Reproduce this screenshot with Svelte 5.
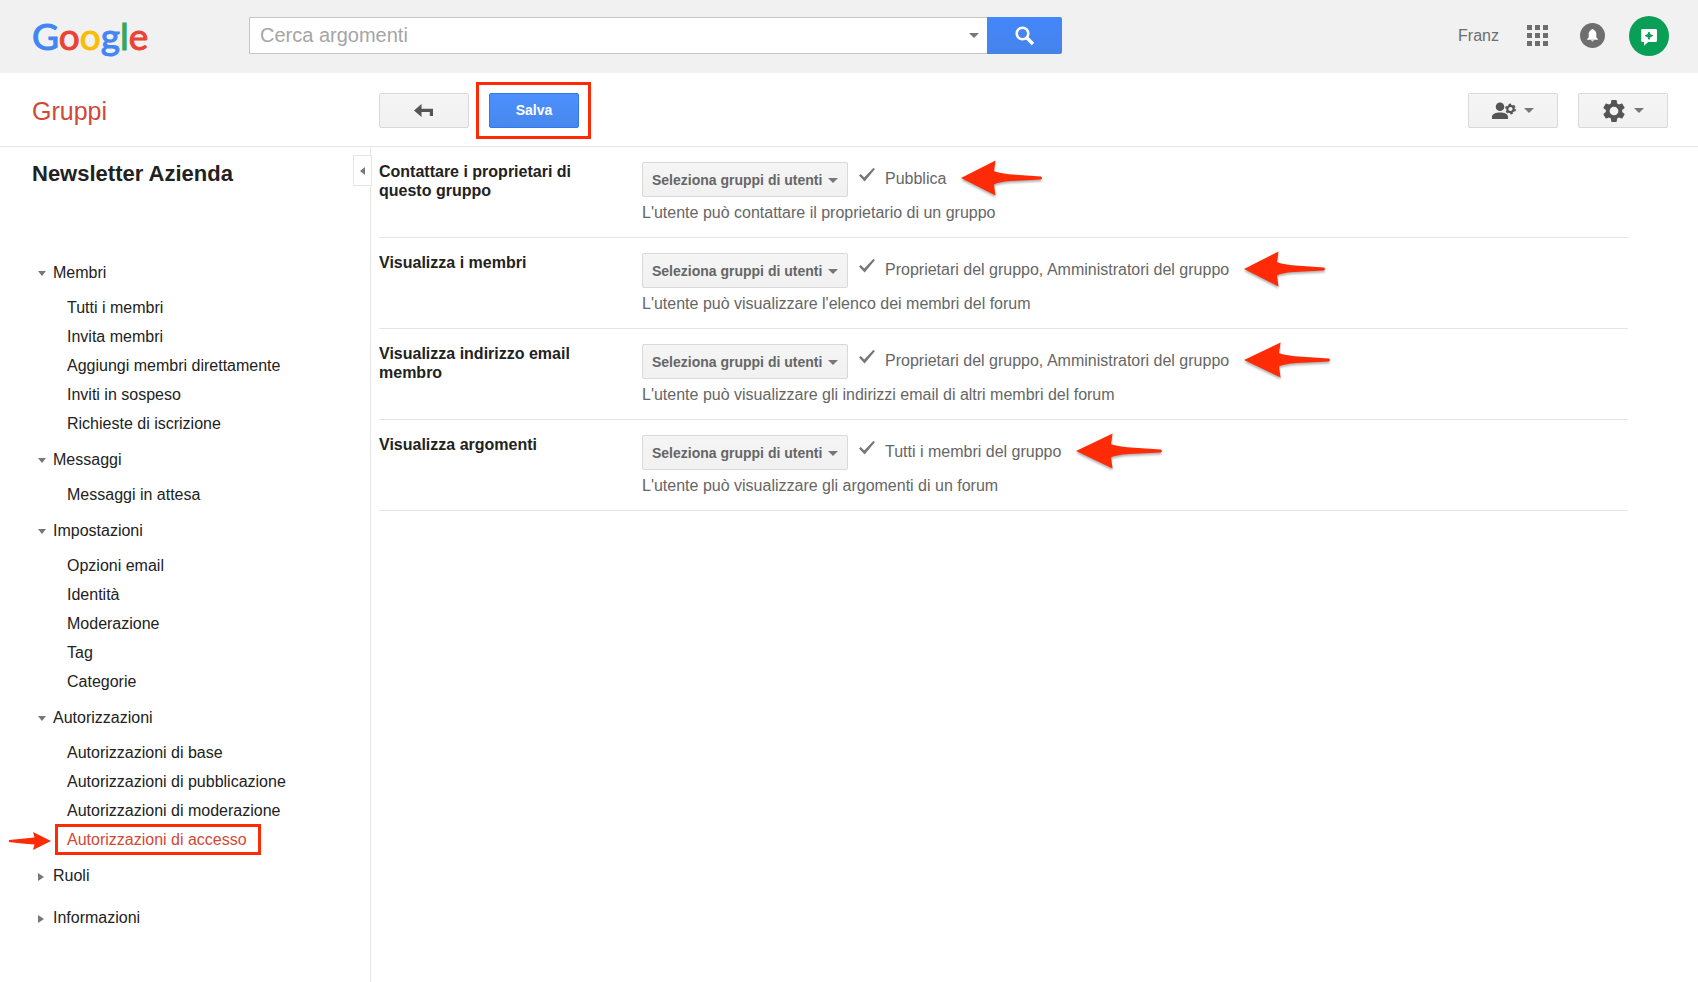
<script>
	const logo = ['G', 'o', 'o', 'g', 'l', 'e'];

	const sections = [
		{
			title: 'Membri',
			items: [
				'Tutti i membri',
				'Invita membri',
				'Aggiungi membri direttamente',
				'Inviti in sospeso',
				'Richieste di iscrizione'
			]
		},
		{ title: 'Messaggi', items: ['Messaggi in attesa'] },
		{
			title: 'Impostazioni',
			items: ['Opzioni email', 'Identità', 'Moderazione', 'Tag', 'Categorie']
		},
		{
			title: 'Autorizzazioni',
			items: [
				'Autorizzazioni di base',
				'Autorizzazioni di pubblicazione',
				'Autorizzazioni di moderazione',
				'Autorizzazioni di accesso'
			]
		},
		{ title: 'Ruoli', items: [] },
		{ title: 'Informazioni', items: [] }
	];

	const permissions = [
		{
			id: 'contact',
			label: 'Contattare i proprietari di questo gruppo',
			value: 'Pubblica',
			hint: "L'utente può contattare il proprietario di un gruppo",
			arrow: 82
		},
		{
			id: 'members',
			label: 'Visualizza i membri',
			value: 'Proprietari del gruppo, Amministratori del gruppo',
			hint: "L'utente può visualizzare l'elenco dei membri del forum",
			arrow: 82
		},
		{
			id: 'emails',
			label: 'Visualizza indirizzo email membro',
			value: 'Proprietari del gruppo, Amministratori del gruppo',
			hint: "L'utente può visualizzare gli indirizzi email di altri membri del forum",
			arrow: 87
		},
		{
			id: 'topics',
			label: 'Visualizza argomenti',
			value: 'Tutti i membri del gruppo',
			hint: "L'utente può visualizzare gli argomenti di un forum",
			arrow: 87
		}
	];

	let active = $state('Autorizzazioni di accesso');
	let query = $state('');
</script>

<div class="page">
	<header class="topbar">
		<a class="logo" href="#home" aria-label="Google"
			>{#each logo as letter, i}<span class="l{i}">{letter}</span>{/each}</a
		>
		<form class="search" onsubmit={(e) => e.preventDefault()}>
			<div class="search-box">
				<input type="text" placeholder="Cerca argomenti" aria-label="Cerca argomenti" bind:value={query} />
				<button type="button" class="search-options" aria-label="Opzioni di ricerca">
					<span class="caret"></span>
				</button>
			</div>
			<button type="submit" class="search-btn" aria-label="Cerca">
				<svg width="20" height="20" viewBox="0 0 20 20" fill="none" stroke="#fff">
					<circle cx="7.5" cy="7.5" r="5.8" stroke-width="2.6" />
					<path d="M11.8 11.8L18 18" stroke-width="3.4" />
				</svg>
			</button>
		</form>
		<div class="account">
			<a class="user" href="#profile">Franz</a>
			<button class="plain" aria-label="App">
				<svg width="21" height="21" viewBox="0 0 21 21" fill="#6e6e6e">
					{#each [0, 8, 16] as y}
						{#each [0, 8, 16] as x}
							<rect {x} {y} width="5" height="5" />
						{/each}
					{/each}
				</svg>
			</button>
			<button class="plain bell" aria-label="Notifiche">
				<svg width="25" height="25" viewBox="0 0 25 25">
					<circle cx="12.5" cy="12.5" r="12.5" fill="#6e6e6e" />
					<path
						d="M12.5 6c.7 0 1.1.4 1.1 1 1.8.5 2.7 1.9 2.7 4v3.5l1.6 1.6v.7H7.1v-.7l1.6-1.6V11c0-2.1.9-3.5 2.7-4 0-.6.4-1 1.1-1zM11.1 17.3h2.8c-.2.8-.7 1.1-1.4 1.1s-1.2-.3-1.4-1.1z"
						fill="#fff"
					/>
				</svg>
			</button>
			<button class="plain" aria-label="Account">
				<svg width="40" height="40" viewBox="0 0 40 40">
					<circle cx="20" cy="20" r="20" fill="#0a9f57" />
					<path d="M13.5 13h13.2q1.3 0 1.3 1.3v10.4q0 1.3-1.3 1.3h-7.5L15 29.8V26h-1.5q-1.3 0-1.3-1.3V14.3q0-1.3 1.3-1.3z" fill="#fff" />
					<path d="M20 16l1.1 2.6 2.6 1.1-2.6 1.1L20 23.4l-1.1-2.6-2.6-1.1 2.6-1.1z" fill="#0a9f57" stroke="#0a9f57" />
				</svg>
			</button>
		</div>
	</header>

	<div class="toolbar">
		<a class="product" href="#gruppi">Gruppi</a>
		<div class="actions">
			<button class="btn" aria-label="Indietro">
				<svg width="20" height="14" viewBox="0 0 20 14" fill="#555">
					<path d="M0 6.5L7.5 0v4.8H19V12h-3.200V8H7.5V13z" />
				</svg>
			</button>
			<div class="framed save-wrap">
				<button class="btn primary">Salva</button>
				<span class="frame"></span>
			</div>
		</div>
		<div class="menus">
			<button class="btn" aria-label="Impostazioni membri">
				<svg width="24" height="18" viewBox="0 0 24 18">
					<circle cx="8" cy="4.8" r="4.3" fill="#555" />
					<path d="M0 17v-2.4c0-2.8 4-4.2 8-4.2s8 1.4 8 4.2V17z" fill="#555" />
					<circle cx="18.5" cy="7" r="3.2" fill="none" stroke="#555" stroke-width="2.2" />
					<circle cx="18.5" cy="7" r="4.7" fill="none" stroke="#555" stroke-width="1.4" stroke-dasharray="2.5 2.42" />
				</svg>
				<span class="caret"></span>
			</button>
			<button class="btn" aria-label="Impostazioni">
				<svg width="24" height="24" viewBox="1 1 22 22" fill="#555">
					<path
						d="M19.43 12.98c.04-.32.07-.64.07-.98s-.03-.66-.07-.98l2.11-1.65c.19-.15.24-.42.12-.64l-2-3.46c-.12-.22-.39-.3-.61-.22l-2.49 1c-.52-.4-1.08-.73-1.69-.98l-.38-2.65C14.46 2.18 14.25 2 14 2h-4c-.25 0-.46.18-.49.42l-.38 2.65c-.61.25-1.17.59-1.69.98l-2.49-1c-.23-.09-.49 0-.61.22l-2 3.46c-.13.22-.07.49.12.64l2.11 1.65c-.04.32-.07.65-.07.98s.03.66.07.98l-2.11 1.65c-.19.15-.24.42-.12.64l2 3.46c.12.22.39.3.61.22l2.49-1c.52.4 1.08.73 1.69.98l.38 2.65c.03.24.24.42.49.42h4c.25 0 .46-.18.49-.42l.38-2.65c.61-.25 1.17-.59 1.69-.98l2.49 1c.23.09.49 0 .61-.22l2-3.46c.12-.22.07-.49-.12-.64l-2.11-1.65zM12 16a4 4 0 1 1 0-8 4 4 0 0 1 0 8z"
					/>
				</svg>
				<span class="caret"></span>
			</button>
		</div>
	</div>

	<div class="body">
		<aside class="sidebar">
			<button class="collapse" aria-label="Comprimi"><span class="caret left"></span></button>
			<h1>Newsletter Azienda</h1>
			<nav>
				{#each sections as section}
					<button class="section">
						<span class="caret" class:right={!section.items.length}></span>{section.title}
					</button>
					{#if section.items.length}
						<ul>
							{#each section.items as item}
								<li>
									<a
										href="#{item}"
										class="framed"
										class:active={item === active}
										onclick={() => (active = item)}
									>
										{item}
										{#if item === active}
											<span class="frame"></span>
											<svg class="pointer" width="44" height="20" viewBox="0 0 44 20">
												<path d="M1 9Q14 7.5 26.5 6.5L25 1l18 9-18 9 1.5-5.500Q14 12.500 1 11z" fill="#fe2b06" />
											</svg>
										{/if}
									</a>
								</li>
							{/each}
						</ul>
					{/if}
				{/each}
			</nav>
		</aside>

		<main>
			{#each permissions as p}
				<div class="row">
					<label for={p.id}>{p.label}</label>
					<div class="setting">
						<div class="choice">
							<div class="select">
								<select id={p.id}>
									<option>Seleziona gruppi di utenti</option>
								</select>
								<span class="caret"></span>
							</div>
							<svg class="check" width="16" height="14" viewBox="0 0 16 14">
								<path d="M0 7.600L1.800 6l3.400 3.400L14.300 0 16 1 5.600 13.400z" fill="#777" />
							</svg>
							<span class="value">
								{p.value}
								<svg class="arrow" width={p.arrow} height="36" viewBox="0 0 82 36" preserveAspectRatio="none">
									<path d="M0 18L34.500 0.500 33 11Q37 13 48 14.200L80 16.600Q82 18 80 19.400L50 21Q37 22 33 24.500L34.500 35.500z" fill="#fe2b06" />
								</svg>
							</span>
						</div>
						<p>{p.hint}</p>
					</div>
				</div>
			{/each}
		</main>
	</div>
</div>

<style>
	:global(body) {
		margin: 0;
		background: #fff;
	}

	.page {
		display: flex;
		flex-direction: column;
		min-height: 100vh;
		font: 16px/19px 'Liberation Sans', Arial, sans-serif;
		color: #222;
	}

	a {
		color: inherit;
		text-decoration: none;
	}

	button {
		font: inherit;
		color: inherit;
		cursor: pointer;
	}

	.caret {
		flex: none;
		border: 5px solid transparent;
		border-top-color: #777;
		border-bottom: 0;
	}

	.topbar {
		display: flex;
		align-items: center;
		box-sizing: border-box;
		height: 73px;
		padding: 0 29px 2px 32px;
		background: #f1f1f1;
	}

	.logo {
		flex: none;
		width: 217px;
		font: 37px/44px Lato, sans-serif;
		-webkit-text-stroke: 1px currentColor;
	}

	.l0,
	.l3 {
		color: #4285f4;
	}

	.l1,
	.l5 {
		color: #ea4335;
	}

	.l2 {
		color: #fbbc05;
	}

	.l4 {
		color: #34a853;
	}

	.search {
		display: flex;
		flex: 0 1 813px;
		height: 37px;
	}

	.search-box {
		display: flex;
		flex: 1;
		box-sizing: border-box;
		border: 1px solid #c6c6c6;
		border-right: 0;
		background: #fff;
	}

	.search input {
		flex: 1;
		min-width: 0;
		padding: 0 10px;
		border: 0;
		outline: 0;
		background: none;
		font: 20px 'Liberation Sans', Arial, sans-serif;
	}

	.search input::placeholder {
		color: #a5a5a5;
	}

	.search-options {
		display: flex;
		align-items: center;
		padding: 0 8px;
		border: 0;
		background: none;
	}

	.search-btn {
		display: flex;
		align-items: center;
		justify-content: center;
		width: 75px;
		border: 0;
		border-radius: 0 2px 2px 0;
		background: linear-gradient(#4387fd, #4683ea);
	}

	.account {
		display: flex;
		align-items: center;
		margin-left: auto;
		gap: 24px;
	}

	.user {
		margin-right: 4px;
		color: #6e6e6e;
	}

	.plain {
		display: flex;
		padding: 0;
		border: 0;
		background: none;
	}

	.bell {
		margin-left: 8px;
	}

	.toolbar {
		display: flex;
		align-items: center;
		box-sizing: border-box;
		height: 74px;
		padding: 2px 30px 0 32px;
		border-bottom: 1px solid #e5e5e5;
	}

	.product {
		width: 347px;
		font-size: 25px;
		line-height: 30px;
		color: #d14836;
	}

	.actions,
	.menus {
		display: flex;
		gap: 20px;
	}

	.menus {
		margin-left: auto;
	}

	.btn {
		display: flex;
		align-items: center;
		justify-content: center;
		gap: 8px;
		width: 90px;
		height: 35px;
		padding: 0;
		border: 1px solid #d9d9d9;
		border-radius: 2px;
		background: linear-gradient(#f5f5f5, #f1f1f1);
	}

	.primary {
		border-color: #3079ed;
		background: linear-gradient(#4d90fe, #4787ed);
		font-size: 14px;
		font-weight: bold;
		color: #fff;
	}

	.framed {
		position: relative;
	}

	.frame {
		position: absolute;
		inset: -7px -14px -7px -12px;
		border: 3px solid #fe2b06;
		pointer-events: none;
	}

	.save-wrap .frame {
		inset: -11px -12px -11px -13px;
	}

	.body {
		display: flex;
		flex: 1;
	}

	.sidebar {
		position: relative;
		flex: none;
		box-sizing: border-box;
		width: 371px;
		padding: 15px 24px 40px 32px;
		border-right: 1px solid #e5e5e5;
	}

	.collapse {
		position: absolute;
		top: 8px;
		right: -2px;
		display: flex;
		align-items: center;
		justify-content: center;
		width: 19px;
		height: 31px;
		padding: 0;
		border: 1px solid #e5e5e5;
		background: #fff;
	}

	.left {
		border: 4px solid transparent;
		border-right: 5px solid #777;
		border-left: 0;
	}

	h1 {
		margin: 0 0 65px;
		font-size: 22px;
		line-height: 24px;
	}

	.section {
		display: flex;
		align-items: center;
		gap: 7px;
		height: 42px;
		padding: 0 6px;
		border: 0;
		background: none;
	}

	.section .caret {
		border-width: 5px 4px 0;
		margin-top: 3px;
	}

	.section .right {
		margin-right: 2px;
		border: 4px solid transparent;
		border-left: 6px solid #777;
		border-right: 0;
	}

	ul {
		margin: 0;
		padding: 0 0 0 35px;
		list-style: none;
	}

	li {
		line-height: 29px;
	}

	.active {
		color: #d14836;
	}

	.pointer {
		position: absolute;
		top: 0;
		right: 100%;
		margin-right: 15px;
	}

	main {
		flex: 1;
		padding: 0 70px 40px 8px;
	}

	.row {
		display: flex;
		box-sizing: border-box;
		min-height: 91px;
		padding: 15px 0 14px;
		border-bottom: 1px solid #e5e5e5;
	}

	label {
		flex: none;
		box-sizing: border-box;
		width: 263px;
		padding-right: 60px;
		font-weight: bold;
	}

	.choice {
		display: flex;
		align-items: center;
		color: #666;
	}

	.select {
		position: relative;
	}

	.select .caret {
		position: absolute;
		top: 16px;
		right: 10px;
		pointer-events: none;
	}

	select {
		display: block;
		appearance: none;
		box-sizing: border-box;
		width: 206px;
		height: 35px;
		padding: 0 20px 0 9px;
		border: 1px solid #d9d9d9;
		border-radius: 2px;
		background: linear-gradient(#f5f5f5, #f1f1f1);
		font: bold 14px 'Liberation Sans', Arial, sans-serif;
		color: #666;
	}

	.check {
		margin: 0 10px 10px 11px;
	}

	.value {
		position: relative;
		padding-bottom: 2px;
	}

	.arrow {
		position: absolute;
		top: -9px;
		left: 100%;
		margin-left: 15px;
		filter: drop-shadow(0 2px 1px rgba(0, 0, 0, 0.3));
	}

	p {
		margin: 6px 0 0;
		color: #666;
	}
</style>
